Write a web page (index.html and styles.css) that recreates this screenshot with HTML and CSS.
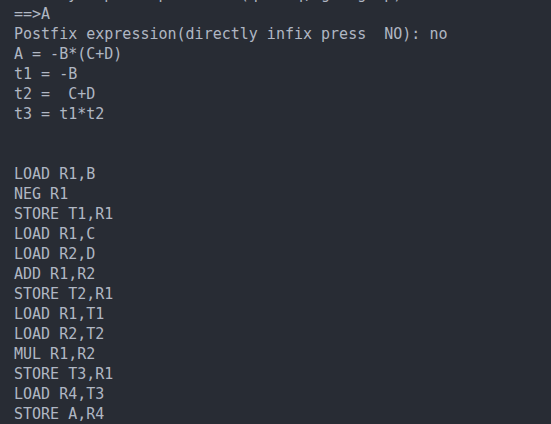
FILE: index.html
```html
<!DOCTYPE html>
<html lang="en">
<head>
<meta charset="utf-8">
<link rel="stylesheet" href="styles.css">
</head>
<body>
<pre class="console">A: easy input expression (quit q, going up):
==&gt;A
Postfix expression(directly infix press  NO): no
A = -B*(C+D)
t1 = -B
t2 =  C+D
t3 = t1*t2


LOAD R1,B
NEG R1
STORE T1,R1
LOAD R1,C
LOAD R2,D
ADD R1,R2
STORE T2,R1
LOAD R1,T1
LOAD R2,T2
MUL R1,R2
STORE T3,R1
LOAD R4,T3
STORE A,R4
</pre>
</body>
</html>
```
FILE: styles.css
```css
html, body {
  margin: 0;
  padding: 0;
  background: #282c34;
  height: 100%;
  overflow: hidden;
}
.console {
  margin: -16px 0 0 0;
  padding: 0 0 0 14px;
  font-family: "DejaVu Sans Mono", "Liberation Mono", monospace;
  font-size: 15px;
  line-height: 20px;
  color: #b0b7c3;
  white-space: pre;
}
```
